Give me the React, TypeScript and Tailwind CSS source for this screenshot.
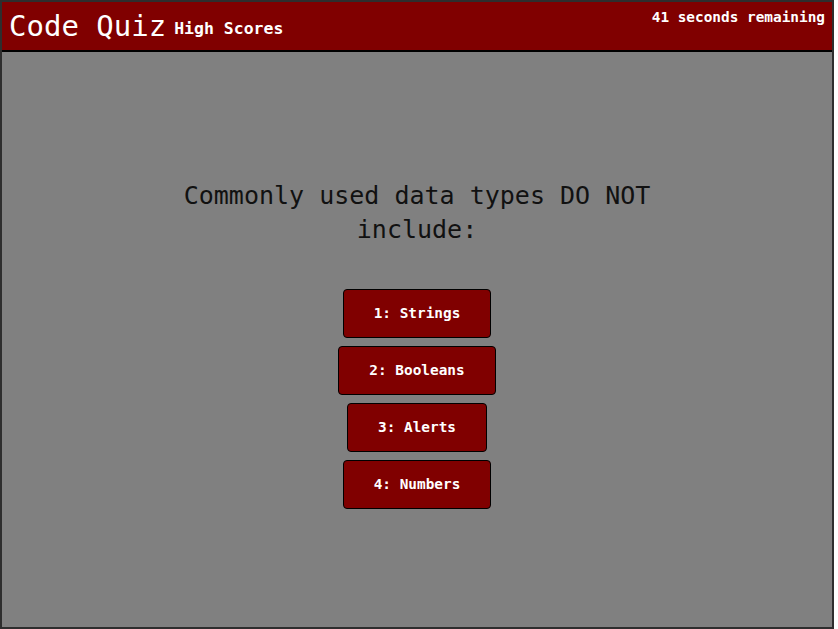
const answers = ["1: Strings", "2: Booleans", "3: Alerts", "4: Numbers"]

export default function App() {
	return (
		<div className="min-h-screen bg-white" style={{ fontFamily: '"DejaVu Sans Mono", "Liberation Mono", monospace' }}>
			<div className="w-[834px] h-[629px] border-2 border-[#2e2e2e] bg-[#808080] flex flex-col">
				<header className="h-[50px] shrink-0 bg-[#800000] border-b-2 border-black flex justify-between text-white">
					<div className="flex items-baseline gap-[8px] pl-[7px] pt-[10px]">
						<h1 className="text-[29px] leading-none font-medium">Code Quiz</h1>
						<a className="text-[16.5px] font-bold leading-none relative -top-[2px]">High Scores</a>
					</div>
					<p className="text-[14.4px] font-bold leading-none pt-[8px] pr-[7px]">41 seconds remaining</p>
				</header>
				<main className="flex-1 flex flex-col items-center pt-[127px]">
					<h2 className="max-w-[500px] text-center text-[25px] leading-[34px] font-medium text-[#111]">
						Commonly used data types DO NOT include:
					</h2>
					<div className="mt-[42px] flex flex-col items-center gap-[8px]">
						{answers.map((a) => (
							<button
								key={a}
								className="h-[49px] px-[30px] rounded-[4px] border border-black bg-[#800000] text-white text-[14.4px] font-bold"
							>
								{a}
							</button>
						))}
					</div>
				</main>
			</div>
		</div>
	)
}
